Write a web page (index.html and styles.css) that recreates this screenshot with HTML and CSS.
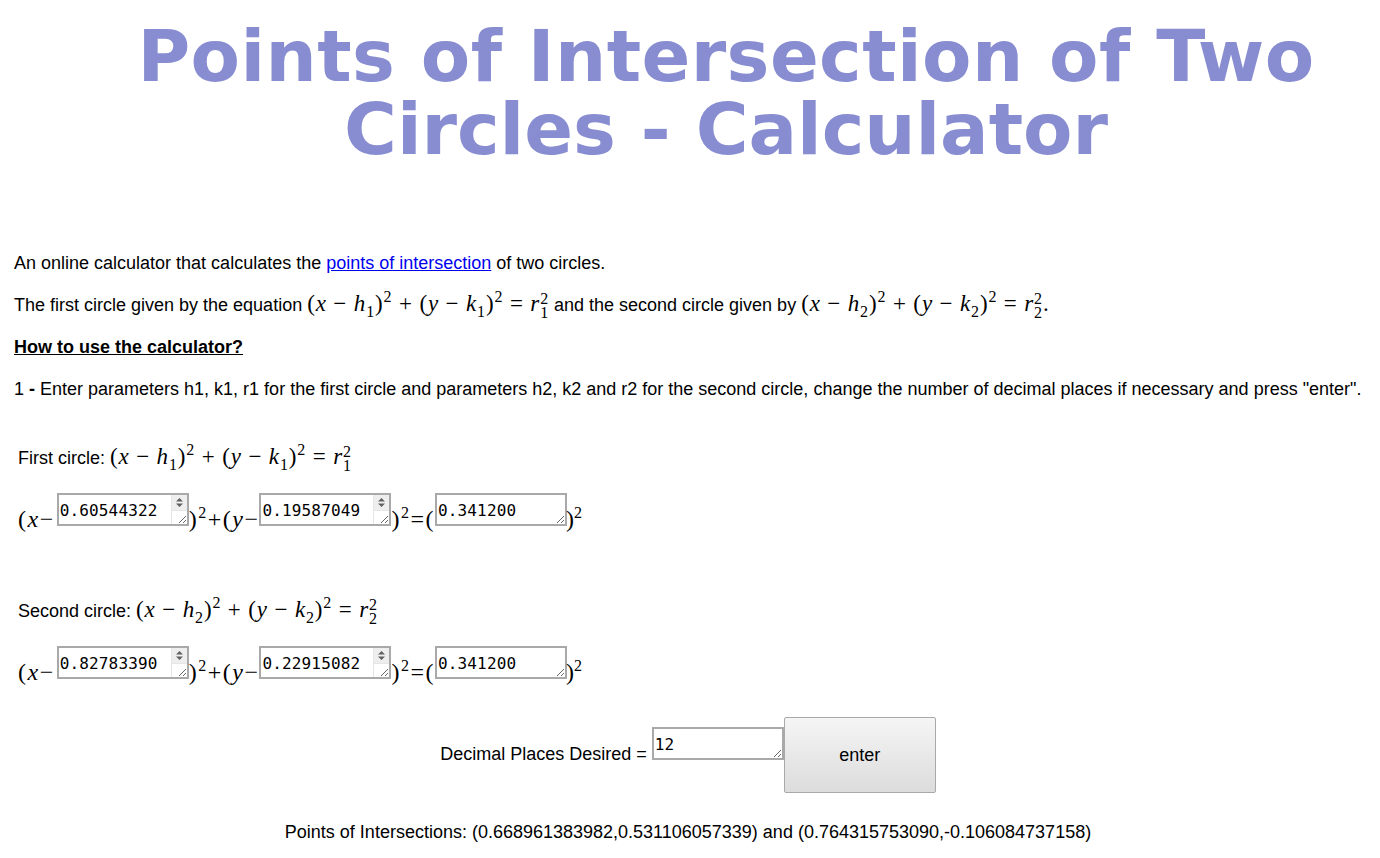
FILE: index.html
```html
<!DOCTYPE html>
<html lang="en">
<head>
  <meta charset="UTF-8">
  <title>Points of Intersection of Two Circles - Calculator</title>
  <link rel="stylesheet" href="styles.css">
</head>
<body>

  <h1>Points of Intersection of Two <span class="title-end">Circles - Calculator</span></h1>

  <p>An online calculator that calculates the <a href="#">points of intersection</a> of two circles.</p>

  <p>The first circle given by the equation
    <span class="math">(<i>x</i> − <i>h</i><sub>1</sub>)<sup>2</sup> + (<i>y</i> − <i>k</i><sub>1</sub>)<sup>2</sup> = <i>r</i><span class="stack"><span>2</span><span>1</span></span></span>
    and the second circle given by
    <span class="math">(<i>x</i> − <i>h</i><sub>2</sub>)<sup>2</sup> + (<i>y</i> − <i>k</i><sub>2</sub>)<sup>2</sup> = <i>r</i><span class="stack"><span>2</span><span>2</span></span>.</span>
  </p>

  <p><b><u>How to use the calculator?</u></b></p>

  <p>1 <b>-</b> Enter parameters h1, k1, r1 for the first circle and parameters h2, k2 and r2 for the second circle, change the number of decimal places if necessary and press "enter".</p>

  <div class="circle">
    <div class="circle-title">First circle:
      <span class="math">(<i>x</i> − <i>h</i><sub>1</sub>)<sup>2</sup> + (<i>y</i> − <i>k</i><sub>1</sub>)<sup>2</sup> = <i>r</i><span class="stack"><span>2</span><span>1</span></span></span>
    </div>
    <div class="circle-row math">
      <span class="row-start">(<i>x</i>−</span>
      <span class="num"><textarea class="box">0.60544322</textarea><span class="spin"><svg width="15" height="15" viewBox="0 0 15 15"><path d="M7.5 3 L11 6.5 L4 6.5 Z M4 8.5 L11 8.5 L7.5 12 Z"/></svg></span></span>
      <span>)<sup>2</sup>+(<i>y</i>−</span>
      <span class="num"><textarea class="box">0.19587049</textarea><span class="spin"><svg width="15" height="15" viewBox="0 0 15 15"><path d="M7.5 3 L11 6.5 L4 6.5 Z M4 8.5 L11 8.5 L7.5 12 Z"/></svg></span></span>
      <span>)<sup>2</sup>=(</span>
      <textarea class="box">0.341200</textarea>
      <span class="row-end">)<sup>2</sup></span>
    </div>
  </div>

  <div class="circle">
    <div class="circle-title">Second circle:
      <span class="math">(<i>x</i> − <i>h</i><sub>2</sub>)<sup>2</sup> + (<i>y</i> − <i>k</i><sub>2</sub>)<sup>2</sup> = <i>r</i><span class="stack"><span>2</span><span>2</span></span></span>
    </div>
    <div class="circle-row math">
      <span class="row-start">(<i>x</i>−</span>
      <span class="num"><textarea class="box">0.82783390</textarea><span class="spin"><svg width="15" height="15" viewBox="0 0 15 15"><path d="M7.5 3 L11 6.5 L4 6.5 Z M4 8.5 L11 8.5 L7.5 12 Z"/></svg></span></span>
      <span>)<sup>2</sup>+(<i>y</i>−</span>
      <span class="num"><textarea class="box">0.22915082</textarea><span class="spin"><svg width="15" height="15" viewBox="0 0 15 15"><path d="M7.5 3 L11 6.5 L4 6.5 Z M4 8.5 L11 8.5 L7.5 12 Z"/></svg></span></span>
      <span>)<sup>2</sup>=(</span>
      <textarea class="box">0.341200</textarea>
      <span class="row-end">)<sup>2</sup></span>
    </div>
  </div>

  <div class="decimals">
    <span class="decimals-label">Decimal Places Desired =&nbsp;</span><textarea class="box">12</textarea><button>enter</button>
  </div>

  <p class="result">Points of Intersections: (0.668961383982,0.531106057339) and (0.764315753090,-0.106084737158)</p>

</body>
</html>
```

FILE: styles.css
```css
body {
  margin: 0;
  padding: 0 18px 0 14px;
  background: #ffffff;
  color: #000000;
  font-family: "Liberation Sans", Arial, sans-serif;
  font-size: 18px;
}

h1 {
  margin: 20px 0 84px 76px;
  font-family: "DejaVu Sans", Verdana, sans-serif;
  font-size: 72px;
  line-height: 73px;
  font-weight: bold;
  letter-spacing: 0.4px;
  text-align: center;
  color: #888dd1;
}

.title-end {
  letter-spacing: -0.05px;
}

p {
  margin: 16px 0;
  height: 26px;
  line-height: 26px;
  white-space: nowrap;
}

.math {
  font-family: "Liberation Serif", "Times New Roman", serif;
  font-size: 23px;
  letter-spacing: 0.85px;
  line-height: 0;
}

.math sub, .math sup {
  font-size: 16px;
  line-height: 0;
}

.stack {
  display: inline-flex;
  flex-direction: column;
  vertical-align: middle;
  font-size: 16px;
  line-height: 14px;
}

.circle {
  padding: 0 4px;
  margin-top: 42px;
}

.circle + .circle {
  margin-top: 0;
}

.circle-title {
  height: 28px;
  line-height: 28px;
}

.circle-row {
  display: flex;
  box-sizing: border-box;
  align-items: flex-end;
  height: 42px;
  margin-top: 21px;
  margin-bottom: 62px;
  padding-bottom: 3px;
  font-size: 24px;
  line-height: 26px;
  letter-spacing: 1.5px;
}

.row-start {
  margin-right: 2px;
}

.row-end {
  margin-left: -1px;
  letter-spacing: 0;
}

.num {
  position: relative;
  display: flex;
}

.box {
  box-sizing: border-box;
  width: 132px;
  height: 33px;
  margin: 0 0 6px;
  padding: 7px 1px 0;
  border: 2px solid #a9a9a9;
  font-family: "DejaVu Sans Mono", monospace;
  font-size: 16px;
  line-height: 17px;
  letter-spacing: 0.15px;
  overflow: hidden;
}

.spin {
  position: absolute;
  top: 2px;
  right: 2px;
  bottom: 8px;
  width: 15px;
  border-left: 1px solid #e6e6e6;
  fill: #606060;
}

.spin svg {
  display: block;
  background: #eeeeee;
  border-bottom: 1px solid #e6e6e6;
}

.decimals {
  display: flex;
  justify-content: center;
  align-items: center;
  height: 76px;
  margin-top: -33px;
}

.decimals-label {
  margin-bottom: 2px;
}

.decimals .box {
  margin: 0 0 23px;
}

button {
  width: 152px;
  height: 76px;
  border: 1px solid #a9a9a9;
  border-radius: 2px;
  background: linear-gradient(#f5f5f5, #dcdcdc);
  font-family: "Liberation Sans", Arial, sans-serif;
  font-size: 18px;
  color: #000000;
}

.result {
  text-align: center;
  margin-top: 26px;
}
```
